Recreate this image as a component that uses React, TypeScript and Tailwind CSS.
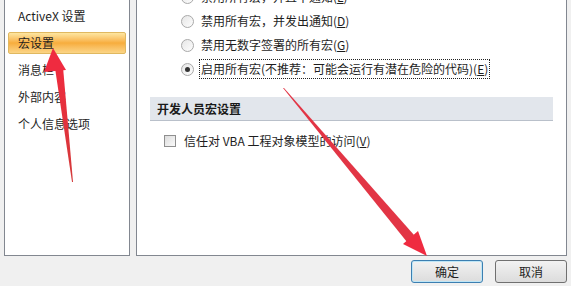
import React from "react";

const font = { fontFamily: '"Microsoft YaHei", "Noto Sans CJK SC", "Noto Sans", sans-serif' };

function Radio({ checked }: { checked?: boolean }) {
  return (
    <span className="relative w-[13px] h-[13px] rounded-full border border-[#a9a9a9] bg-gradient-to-br from-[#e6e6e6] to-[#fdfdfd] flex items-center justify-center shrink-0">
      {checked && <span className="w-[5px] h-[5px] rounded-full bg-[#333]" />}
    </span>
  );
}

function RadioRow({ label, checked }: { label: React.ReactNode; checked?: boolean }) {
  return (
    <div className="h-[24px] flex items-center">
      <div className="ml-[44px] mr-[6px]">
        <Radio checked={checked} />
      </div>
      <span
        className={
          "px-[1px] leading-[18px] " + (checked ? "outline outline-1 outline-dotted outline-[#222]" : "")
        }
      >
        {label}
      </span>
    </div>
  );
}

export default function App() {
  return (
    <div
      className="relative w-[571px] h-[286px] bg-[#f0f0f0] overflow-hidden text-[12px] text-[#1e1e1e]"
      style={font}
    >
      <div className="flex h-[256px] pl-[4px] pr-[4px] gap-[6px]">
        {/* left panel */}
        <div className="w-[126px] h-full bg-white border-x border-b border-[#828790] pt-[2px] px-[3px]">
          <div className="h-[27px] flex items-center pl-[10px]">ActiveX 设置</div>
          <div className="h-[27px] flex items-center">
            <div className="w-full h-[22px] flex items-center pl-[9px] rounded-[2px] border border-[#e0b860] bg-gradient-to-b from-[#fde6a0] via-[#f7ad3c] to-[#fbd585]">
              宏设置
            </div>
          </div>
          <div className="h-[27px] flex items-center pl-[10px]">消息栏</div>
          <div className="h-[27px] flex items-center pl-[10px]">外部内容</div>
          <div className="h-[27px] flex items-center pl-[10px]">个人信息选项</div>
        </div>
        {/* right panel */}
        <div className="flex-1 h-full bg-white border-x border-b border-[#828790] relative">
          <div className="-mt-[15px]">
            <RadioRow label={<>禁用所有宏，并且不通知(<u>L</u>)</>} />
            <RadioRow label={<>禁用所有宏，并发出通知(<u>D</u>)</>} />
            <RadioRow label={<>禁用无数字签署的所有宏(<u>G</u>)</>} />
            <RadioRow checked label={<>启用所有宏(不推荐：可能会运行有潜在危险的代码)(<u>E</u>)</>} />
          </div>
          <div className="mt-[16px] ml-[13px] mr-[13px] h-[24px] bg-[#e2e6ec] border-b border-[#b9c0ca] flex items-center pl-[7px] font-bold text-[#1a1a1a]">
            开发人员宏设置
          </div>
          <div className="mt-[10px] flex items-center h-[20px]">
            <span className="ml-[27px] mr-[8px] w-[12px] h-[12px] border border-[#8f8f8f] bg-gradient-to-br from-[#dcdcdc] to-[#fafafa]" />
            <span>信任对 VBA 工程对象模型的访问(<u>V</u>)</span>
          </div>
        </div>
      </div>
      {/* buttons */}
      <div className="flex justify-end gap-[12px] pr-[4px] pt-[4px]">
        <button className="w-[72px] h-[23px] rounded-[3px] border border-[#3c7fb1] bg-gradient-to-b from-[#f2f2f2] to-[#dcdcdc] shadow-[inset_0_0_0_1px_#bfe6f6] text-[12px]">
          确定
        </button>
        <button className="w-[72px] h-[23px] rounded-[3px] border border-[#707070] bg-gradient-to-b from-[#f2f2f2] to-[#dcdcdc] text-[12px]">
          取消
        </button>
      </div>
      {/* annotation arrows */}
      <svg className="absolute left-0 top-0 pointer-events-none" width="571" height="286">
        <defs>
          <linearGradient id="g1" x1="0" y1="0" x2="0" y2="1">
            <stop offset="0" stopColor="#ef2b3e" />
            <stop offset="1" stopColor="#d33a3a" />
          </linearGradient>
        </defs>
        {/* arrow 1 */}
        <polygon points="73,182 72,182 55,68 63,67" fill="url(#g1)" />
        <polygon points="53,48 44,72 66,70" fill="#ef2b40" />
        {/* arrow 2 */}
        <polygon points="283,88 284,88 414,235 407,242" fill="#e23545" />
        <polygon points="427,256 403,244 418,231" fill="#ef2b40" />
      </svg>
    </div>
  );
}
